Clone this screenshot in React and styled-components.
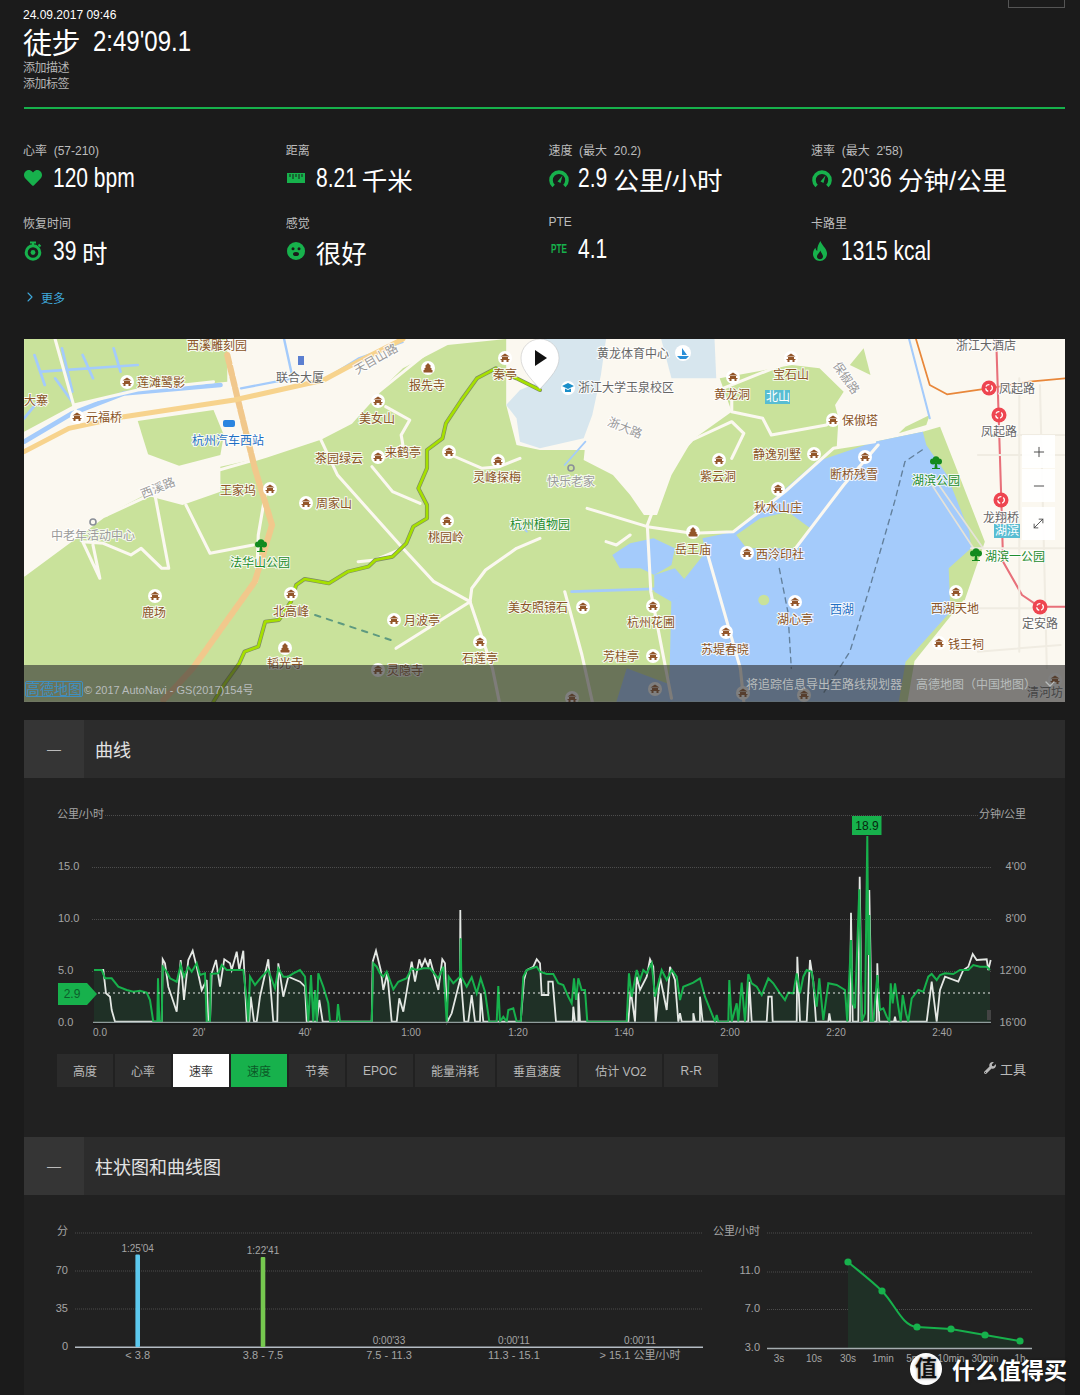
import React from "react";
import styled, { createGlobalStyle } from "styled-components";
import { Plus, Minus, MoveDiagonal, ChevronRight, ChevronDown } from "lucide-react";
import { FaWrench, FaHeart } from "react-icons/fa";

const GREEN = "#17b14c";
const SANS = `"Liberation Sans", "Noto Sans CJK SC", sans-serif`;

const Global = createGlobalStyle`
  html, body { margin: 0; padding: 0; background: #1b1b1b; }
  body { font-family: ${SANS}; color: #fff; overflow: hidden; }
`;

const Page = styled.div`
  width: 1080px;
  height: 1395px;
  overflow: hidden;
  position: relative;
  box-sizing: border-box;
  padding: 0 15px 0 24px;
`;

const Header = styled.header`
  display: flex;
  justify-content: space-between;
  align-items: flex-start;
  padding-top: 8px;
  height: 107px;
  box-sizing: border-box;
`;

const TopBox = styled.div`
  width: 55px;
  height: 7px;
  margin-top: -8px;
  border: 1px solid #555;
  border-top: 0;
`;

const DateLine = styled.div`
  font-size: 12px;
  line-height: 14px;
  height: 14px;
  margin-left: -1px;
`;

const Title = styled.div`
  display: flex;
  align-items: center;
  gap: 13px;
  height: 38px;
`;

const TitleCjk = styled.span`
  font-size: 29px;
  letter-spacing: -0.5px;
  margin-left: -1px;
`;

// no condensed face is installed, so the numerals are squeezed from a regular one;
// $w is the width they end up taking in the flow
const Squeezed = styled.span`
  display: inline-block;
  width: ${(p) => p.$w}px;
  white-space: pre;
  transform: scaleX(${(p) => p.$scale || 0.75});
  transform-origin: left center;
`;

const TitleTime = styled(Squeezed)`
  font-size: 30px;
`;

const HeaderLink = styled.div`
  font-size: 12px;
  line-height: 16px;
  color: #b5b5b5;
  letter-spacing: -0.5px;
  margin-left: -1px;
`;

const Divider = styled.div`
  height: 2px;
  background: ${GREEN};
`;

const StatGrid = styled.section`
  display: grid;
  grid-template-columns: repeat(4, 262.7px);
  row-gap: 17px;
  margin-top: 34px;
`;

const Stat = styled.div`
  height: 56px;
  margin-top: ${(p) => (p.$raised ? "-2px" : "0")};
`;

const StatLabel = styled.div`
  font-size: 12px;
  line-height: 16px;
  color: #bdbdbd;
  white-space: pre;
  margin-left: -1px;
`;

const StatRow = styled.div`
  display: flex;
  align-items: center;
  height: 38px;
`;

const IconSlot = styled.div`
  width: 29px;
  flex: none;
  display: flex;
  align-items: center;
  color: ${GREEN};
`;

const PteMark = styled(Squeezed)`
  font-size: 12px;
  font-weight: 700;
  margin-left: 2px;
`;

const Value = styled.div`
  display: flex;
  align-items: center;
  gap: 5px;
  font-size: 28px;
  white-space: pre;
`;

const Unit = styled.span`
  font-size: 25.5px;
`;

const More = styled.div`
  display: flex;
  align-items: center;
  gap: 3px;
  margin: 17px 0 0 -2px;
  height: 16px;
  font-size: 12px;
  color: #3fa9dc;
`;

const MapFrame = styled.section`
  position: relative;
  height: 363px;
  margin-top: 34px;
  overflow: hidden;
`;

const MapSvg = styled.svg`
  display: block;
`;

const MapBar = styled.div`
  position: absolute;
  left: 0;
  right: 0;
  bottom: 0;
  height: 37px;
  background: rgba(48, 48, 48, 0.62);
  display: flex;
  align-items: flex-end;
  padding: 0 7px 5px 1px;
  box-sizing: border-box;
  font-size: 12px;
  color: #b8bcbc;
`;

const AmapLogo = styled.span`
  font-size: 14px;
  color: #3f8fc0;
  border: 1px solid #3f8fc0;
  border-radius: 2px;
  line-height: 14px;
  margin-right: 1px;
`;

const Credit = styled.span`
  font-size: 11px;
`;

const BarRight = styled.div`
  margin-left: auto;
  display: flex;
  align-items: center;
  gap: 14px;
  padding-bottom: 5px;
`;

const BarChevron = styled(ChevronDown)`
  margin-left: -8px;
`;

const ZoomStack = styled.div`
  position: absolute;
  left: 998px;
  top: 96px;
  width: 33px;
  display: flex;
  flex-direction: column;
`;

const ZoomBtn = styled.div`
  height: 33px;
  margin-bottom: ${(p) => p.$gap || 1}px;
  background: rgba(255, 255, 255, 0.92);
  color: #444;
  display: flex;
  align-items: center;
  justify-content: center;
`;

const Panel = styled.section`
  margin-top: ${(p) => p.$top}px;
  background: #212121;
`;

const PanelHead = styled.div`
  display: flex;
  align-items: center;
  height: 58px;
  background: #2c2c2c;
`;

const Toggle = styled.div`
  width: 60px;
  height: 58px;
  background: #353535;
  color: #bbb;
  display: flex;
  align-items: center;
  justify-content: center;
  font-size: 14px;
`;

const PanelTitle = styled.h2`
  margin: 0 0 0 11px;
  font-size: 18px;
  font-weight: 400;
  color: #e2e2e2;
`;

const Body = styled.div`
  padding-bottom: ${(p) => p.$pad || 0}px;
`;

const ChartSvg = styled.svg`
  display: block;
  flex: none;
`;

const ToolRow = styled.div`
  display: flex;
  align-items: flex-start;
  margin-top: 9px;
  padding: 0 39px 0 33px;
  height: 33px;
`;

const Metric = styled.button`
  height: 33px;
  padding: 0 16px;
  margin-right: 2px;
  border: 0;
  font: 12px ${SANS};
  background: ${(p) => (p.$state === "white" ? "#fff" : p.$state === "green" ? GREEN : "#2b2b2b")};
  color: ${(p) => (p.$state === "white" ? "#333" : p.$state === "green" ? "#0c5a28" : "#b9b9b9")};
`;

const Tools = styled.div`
  margin-left: auto;
  display: flex;
  align-items: center;
  gap: 4px;
  height: 28px;
  font-size: 13px;
  color: #b9b9b9;
`;

const Charts = styled.div`
  display: flex;
`;

const Axis = styled.text`
  font-family: ${SANS};
  font-size: ${(p) => p.$size || 11}px;
  fill: ${(p) => p.$fill || "#a5a5a5"};
  text-anchor: ${(p) => p.$anchor || "start"};
  dominant-baseline: central;
`;

const MapLabel = styled.text`
  font-family: ${SANS};
  font-size: 12px;
  text-anchor: middle;
  dominant-baseline: central;
  paint-order: stroke;
  stroke: rgba(255, 255, 255, 0.85);
  stroke-width: 2px;
  fill: ${(p) => ({ brown: "#8a5426", green: "#1d8c2d", blue: "#1e6fc4", gray: "#9a9a9a", dark: "#666" }[p.$kind])};
`;

const Watermark = styled.div`
  position: absolute;
  left: 910px;
  top: 1352px;
  display: flex;
  align-items: center;
  gap: 10px;
  font-size: 23px;
  font-weight: 700;
  color: #fff;
  text-shadow: 0 0 3px rgba(0, 0, 0, 0.5);
`;

const WatermarkDisc = styled.span`
  width: 32px;
  height: 32px;
  border-radius: 50%;
  background: #fff;
  color: #111;
  font-size: 22px;
  line-height: 31px;
  text-align: center;
`;

// traced series, in the coordinates of a 3x crop starting at (30, 800)
const green = [192,510,215,510,225,535,245,535,265,560,290,570,310,575,330,572,350,578,360,600,370,665,382,665,384,535,388,665,395,665,398,500,410,515,420,535,440,545,452,495,462,530,475,500,485,515,500,490,510,525,525,520,530,665,540,665,542,522,565,520,575,495,590,510,640,510,650,600,655,665,660,530,675,555,695,530,715,510,735,565,745,505,760,530,775,530,790,520,810,510,825,530,835,665,843,525,850,665,855,570,860,665,865,520,880,560,895,610,900,665,920,665,924,612,930,665,1025,665,1030,490,1040,500,1050,520,1060,530,1070,515,1090,568,1105,545,1130,535,1145,505,1160,510,1180,505,1200,505,1225,535,1240,500,1250,665,1256,530,1270,550,1290,530,1292,415,1294,530,1310,560,1325,532,1340,580,1352,535,1365,575,1378,665,1400,665,1405,558,1410,665,1420,650,1430,665,1435,630,1450,625,1460,665,1472,665,1480,530,1490,510,1520,500,1530,515,1550,522,1570,522,1585,550,1600,555,1615,590,1625,610,1632,535,1638,600,1645,535,1655,570,1665,570,1672,665,1790,665,1797,520,1805,590,1820,510,1830,540,1840,510,1850,520,1865,490,1875,590,1895,510,1910,540,1925,510,1940,530,1950,600,1960,560,1990,548,2010,535,2025,590,2045,640,2055,665,2060,645,2065,665,2095,665,2098,540,2105,665,2120,610,2125,665,2135,548,2145,665,2155,522,2165,550,2180,560,2195,585,2215,535,2230,550,2250,580,2265,600,2275,578,2290,580,2300,520,2310,580,2320,530,2330,510,2345,515,2360,620,2368,535,2380,660,2395,550,2420,555,2445,570,2452,665,2463,420,2468,610,2475,625,2488,268,2495,665,2505,640,2512,108,2515,465,2518,345,2523,665,2530,665,2542,525,2550,630,2560,625,2570,650,2578,665,2582,550,2588,610,2595,550,2605,620,2612,665,2618,585,2628,640,2635,665,2645,595,2665,570,2680,575,2695,530,2705,522,2720,540,2730,525,2745,520,2770,522,2790,510,2815,510,2830,495,2850,500,2870,500,2880,510];
const white = [192,510,220,510,228,580,240,590,245,630,255,665,395,665,398,478,405,490,415,560,425,590,440,635,452,480,462,600,475,480,488,452,500,500,515,570,530,540,535,665,540,665,545,520,558,480,570,560,583,478,600,490,605,510,620,455,628,510,640,452,650,665,658,665,662,590,672,665,680,665,690,590,715,478,730,665,742,665,745,490,760,590,775,530,810,545,825,560,830,665,860,665,868,600,878,665,1025,665,1028,485,1038,452,1052,510,1060,570,1072,520,1085,665,1100,665,1108,595,1120,635,1145,485,1155,545,1168,478,1175,500,1185,478,1195,500,1200,478,1225,570,1237,478,1245,490,1252,665,1265,640,1290,540,1291,330,1293,540,1303,665,1315,665,1325,585,1335,665,1350,665,1352,580,1360,665,1472,665,1482,540,1490,510,1510,500,1520,478,1530,490,1535,585,1555,585,1555,545,1568,545,1578,665,1628,665,1630,620,1635,665,1645,665,1645,580,1650,665,1795,665,1802,570,1815,665,1820,530,1830,570,1850,530,1860,478,1870,500,1877,665,1890,530,1910,630,1920,500,1935,540,1945,665,1950,640,1955,665,1990,665,1990,640,1995,665,2010,665,2010,590,2018,665,2155,665,2158,545,2165,665,2210,665,2215,590,2225,590,2228,665,2300,665,2302,470,2310,665,2330,665,2340,480,2350,545,2358,665,2395,665,2398,640,2402,665,2460,665,2463,338,2468,665,2485,665,2489,230,2495,665,2515,665,2518,270,2525,665,2540,665,2542,490,2548,665,2592,665,2595,650,2598,665,2690,665,2705,545,2720,665,2730,570,2745,530,2785,545,2800,510,2815,500,2828,462,2840,480,2870,478,2875,510,2882,480];

const toChart = (arr) => {
  const out = [];
  for (let i = 0; i < arr.length; i += 2) out.push(`${(30 + arr[i] / 3).toFixed(1)},${(800 + arr[i + 1] / 3).toFixed(1)}`);
  return out.join(" ");
};

const xTicks = [["0.0", 100], ["20'", 199], ["40'", 305], ["1:00", 411], ["1:20", 518], ["1:40", 624], ["2:00", 730], ["2:20", 836], ["2:40", 942]];

const SpeedChart = () => (
  <ChartSvg width="1041" height="267" viewBox="24 778 1041 267">
    {[815.5, 867.5, 919.5, 971.5].map((y, i) => (
      <line key={y} x1={i === 0 ? 105 : 92} x2={i === 0 ? 978 : 991} y1={y} y2={y} stroke="#4d4d4d" strokeDasharray="1 1" />
    ))}
    <polygon points={`94,1022.5 ${toChart(green)} 990,1022.5`} fill="#1f3026" />
    <polyline points={toChart(white)} fill="none" stroke="#e4e8e4" strokeWidth="1.8" />
    <polyline points={toChart(green)} fill="none" stroke={GREEN} strokeWidth="2" />
    <line x1="93" x2="991" y1="993" y2="993" stroke="#e8e8e8" strokeDasharray="2 3" />
    <line x1="93" x2="991" y1="1022.5" y2="1022.5" stroke="#8f9b9b" strokeWidth="1.6" />
    <line x1="93" x2="991" y1="1023.8" y2="1023.8" stroke="#0c0c0c" />
    <rect x="987" y="1010" width="4" height="10" fill="#444" />
    <polygon points="58,983 87,983 97,994 87,1005 58,1005" fill={GREEN} />
    <Axis x="72" y="994" $anchor="middle" $fill="#0d5e2b" $size={12}>2.9</Axis>
    <rect x="852" y="816" width="29.5" height="19" fill={GREEN} />
    <Axis x="867" y="826" $anchor="middle" $fill="#06280f" $size={12}>18.9</Axis>
    <Axis x="57" y="814">公里/小时</Axis>
    <Axis x="58" y="866">15.0</Axis>
    <Axis x="58" y="918">10.0</Axis>
    <Axis x="58" y="970">5.0</Axis>
    <Axis x="58" y="1022">0.0</Axis>
    <Axis x="1026" y="814" $anchor="end">分钟/公里</Axis>
    <Axis x="1026" y="866" $anchor="end">4'00</Axis>
    <Axis x="1026" y="918" $anchor="end">8'00</Axis>
    <Axis x="1026" y="970" $anchor="end">12'00</Axis>
    <Axis x="1026" y="1022" $anchor="end">16'00</Axis>
    {xTicks.map(([t, x]) => (
      <Axis key={t} x={x} y="1032" $anchor="middle" $size={10}>{t}</Axis>
    ))}
  </ChartSvg>
);

const zoneBars = [
  { x: 137.7, top: 1254.5, color: "#5cc8ee", time: "1:25'04", range: "< 3.8" },
  { x: 263, top: 1257, color: "#76c84f", time: "1:22'41", range: "3.8 - 7.5" },
  { x: 389, time: "0:00'33", range: "7.5 - 11.3" },
  { x: 514, time: "0:00'11", range: "11.3 - 15.1" },
  { x: 640, time: "0:00'11", range: "> 15.1 公里/小时" },
];

const ZoneChart = () => (
  <ChartSvg width="684" height="200" viewBox="24 1195 684 200">
    {[1233, 1271, 1309].map((y) => (
      <line key={y} x1="75" x2="703" y1={y} y2={y} stroke="#4d4d4d" strokeDasharray="1 1" />
    ))}
    <Axis x="68" y="1231" $anchor="end">分</Axis>
    <Axis x="68" y="1270" $anchor="end">70</Axis>
    <Axis x="68" y="1308" $anchor="end">35</Axis>
    <Axis x="68" y="1346" $anchor="end">0</Axis>
    <line x1="75" x2="703" y1="1347.2" y2="1347.2" stroke="#b4bcc4" strokeWidth="1.4" />
    {zoneBars.map((b) => (
      <React.Fragment key={b.time + b.x}>
        {b.top && <rect x={b.x - 2.3} y={b.top} width="4.6" height={1347 - b.top} rx="1" fill={b.color} />}
        <Axis x={b.x} y={b.top ? b.top - 6.5 : 1340} $anchor="middle" $size={10}>{b.time}</Axis>
        <Axis x={b.x} y="1355" $anchor="middle">{b.range}</Axis>
      </React.Fragment>
    ))}
  </ChartSvg>
);

const peakPts = [[848, 1262], [882, 1291], [917, 1327], [951, 1329], [985, 1335], [1020, 1341]];
const peakLabels = [["3s", 779], ["10s", 814], ["30s", 848], ["1min", 883], ["5min", 917], ["10min", 951], ["30min", 985], ["1h", 1020]];
const peakLine = "M848,1262 C860,1272 872,1281 882,1291 C895,1304 902,1326 917,1327 L951,1329 L985,1335 L1020,1341";

const PeakChart = () => (
  <ChartSvg width="357" height="200" viewBox="708 1195 357 200">
    {[1233, 1272, 1309.5].map((y) => (
      <line key={y} x1="767" x2="1032" y1={y} y2={y} stroke="#4d4d4d" strokeDasharray="1 1" />
    ))}
    <path d={`${peakLine} L1020,1348 L848,1348 Z`} fill="#1f3026" />
    <path d={peakLine} fill="none" stroke={GREEN} strokeWidth="2" />
    {peakPts.map(([x, y]) => <circle key={x} cx={x} cy={y} r="3.6" fill={GREEN} />)}
    <line x1="767" x2="1032" y1="1348.5" y2="1348.5" stroke="#a5adb0" strokeWidth="1.6" />
    <Axis x="760" y="1231" $anchor="end">公里/小时</Axis>
    <Axis x="760" y="1270" $anchor="end">11.0</Axis>
    <Axis x="760" y="1308" $anchor="end">7.0</Axis>
    <Axis x="760" y="1347" $anchor="end">3.0</Axis>
    {peakLabels.map(([t, x]) => (
      <Axis key={t} x={x} y="1358" $anchor="middle" $size={10}>{t}</Axis>
    ))}
  </ChartSvg>
);

// map shapes are traced from a crop scaled 2.904 x 3, origin y = 335
const GreenLand = "70,720 300,545 420,480 530,510 640,470 640,395 770,365 930,310 1020,262 1100,170 1170,100 1300,30 1470,12 1470,210 1500,330 1568,345 1698,345 1695,375 1780,420 1830,480 1870,540 1908,540 1950,420 2010,315 2125,230 2090,130 2300,90 2380,100 2450,170 2425,210 2435,250 2430,335 2540,320 2680,290 2730,275 2770,380 2860,620 2800,800 2660,980 2640,1100 70,1100";
const LakeShape = "2540,320 2370,380 2270,470 2130,590 2040,610 2050,650 1950,780 1945,990 1940,1100 2610,1100 2630,980 2760,830 2755,700 2820,640 2815,590 2750,420 2690,330 2680,290";

const roads = [
  "160,12 215,215 240,280 310,540",
  "215,210 400,165 620,140",
  "660,60 690,190 740,400 770,480 750,600 745,740",
  "540,510 610,655 735,630",
  "270,630 290,730 240,620 300,625 380,660 410,640 470,700 490,700 450,480",
  "70,720 300,545 520,440 770,365 930,310 1020,262 1100,170 1280,20",
  "930,310 980,420 1170,640 1260,740 1365,800 1430,1000 1450,1100",
  "1080,395 1140,470 1220,505",
  "1120,215 1190,255 1165,300 1170,330 1120,365",
  "1310,360 1400,400 1450,395 1510,370",
  "1365,800 1150,940",
  "1365,800 1370,760 1410,705 1500,640 1568,610",
  "1170,640 1090,675 1040,680",
  "1705,520 1880,575 2010,595 2130,590 2280,470 2420,340 2540,320",
  "1880,575 1890,770 1950,1090",
  "1880,570 1950,380 2010,315 2125,260 2160,295 2125,370",
  "2125,185 2125,230 2215,250 2240,300 2400,270 2425,240",
  "2050,640 2150,1000 2160,1100",
  "2550,330 2450,450 2310,640",
  "2040,185 2390,40 2470,12",
  "1830,600 1790,630 1760,620",
  "1640,770 1690,960 1720,1100",
  "2800,800 2660,980 2640,1100",
];

const temples = [[127,382],[77,417],[378,401],[378,457],[449,452],[498,461],[270,489],[306,503],[447,521],[155,596],[291,594],[394,620],[480,642],[378,670],[505,358],[791,358],[733,377],[833,420],[814,454],[719,460],[865,457],[778,489],[747,553],[583,607],[653,606],[795,602],[726,632],[653,656],[956,592],[939,643],[572,698],[655,689],[743,693],[804,695],[1055,680]];
const towers = [[428,368],[285,648],[693,532]];
const trees = [[261,546],[936,463],[976,555]];
const metros = [[989,388],[999,415],[1001,500],[1040,607]];

const mapLabels = [
  ["西溪雕刻园",217,346],["莲滩鹭影",161,383],["联合大厦",300,378,"dark"],["报先寺",427,386],["秦亭",505,375],["大寨",36,401],["元福桥",104,418],["美女山",377,419],["杭州汽车西站",228,441,"blue"],["茶园绿云",339,459],["来鹤亭",403,453],["灵峰探梅",497,478],["王家坞",238,491],["周家山",334,504],["中老年活动中心",93,536,"gray"],["快乐老家",571,482,"gray"],["杭州植物园",540,525,"green"],["桃园岭",446,538],["法华山公园",260,563,"green"],["鹿场",154,613],["北高峰",291,612],["月波亭",422,621],["美女照镜石",538,608],["杭州花圃",651,623],["石莲亭",480,659],["韬光寺",285,664],["灵隐寺",405,671],["芳桂亭",621,657],["苏堤春晓",725,650],["湖心亭",795,620],["西湖",842,610,"blue"],["西湖天地",955,609],["钱王祠",966,645],["定安路",1040,624,"dark"],["湖滨一公园",1015,557,"green"],["龙翔桥",1001,518,"dark"],["湖滨公园",936,481,"green"],["断桥残雪",854,475],["秋水山庄",778,508],["岳王庙",693,550],["西泠印社",780,555],["紫云洞",718,477],["静逸别墅",777,455],["保俶塔",860,421],["黄龙洞",732,395],["宝石山",791,375],["黄龙体育中心",633,354,"dark"],["浙江大学玉泉校区",626,388,"dark"],["凤起路",1017,389,"dark"],["凤起路",999,432,"dark"],["浙江大酒店",986,346,"dark"],["清河坊",1045,693,"dark"],
];

const roadNames = [["西溪路",158,488,-22],["天目山路",376,359,-30],["浙大路",625,428,22],["保俶路",846,378,55]];

const Temple = ({ x, y }) => (
  <g transform={`translate(${x} ${y})`}>
    <circle r="7" fill="#fff" />
    <path d="M-4.5,-1.5 L0,-4.5 L4.5,-1.5 Z M-3,-1 H3 V1 H-3 Z M-4.5,1 H4.5 V2 H-4.5 Z M-3.5,2 H-1.5 V4 H-3.5 Z M1.5,2 H3.5 V4 H1.5 Z" fill="#93562a" />
  </g>
);

const Tower = ({ x, y }) => (
  <g transform={`translate(${x} ${y})`}>
    <circle r="7" fill="#fff" />
    <path d="M0,-5 L3,-2 H-3 Z M-2.5,-2 H2.5 V0 H-2.5 Z M-3.5,0 H3.5 V2 H-3.5 Z M-4.5,2 H4.5 V4.5 H-4.5 Z" fill="#93562a" />
  </g>
);

const Tree = ({ x, y }) => (
  <g transform={`translate(${x} ${y})`}>
    <circle cx="-3" cy="-1.5" r="3" fill="#138a1e" />
    <circle cx="3" cy="-1.5" r="3" fill="#138a1e" />
    <circle cy="-3.5" r="3.2" fill="#138a1e" />
    <path d="M-1,0 H1 L1.5,5 H-1.5 Z M-4,5 H4 V6 H-4 Z" fill="#138a1e" />
  </g>
);

const Metro = ({ x, y }) => (
  <g transform={`translate(${x} ${y})`}>
    <circle r="7.5" fill="#ee4550" />
    <circle r="3.4" fill="none" stroke="#fff" strokeWidth="1.4" strokeDasharray="4 2" />
  </g>
);

const routeD = "M620,1100 L650,1050 L695,985 L710,950 L750,935 L770,860 L810,855 L845,800 L860,750 L885,732 L955,745 L1010,710 L1070,695 L1090,675 L1140,665 L1180,625 L1200,575 L1240,550 L1240,510 L1215,460 L1240,400 L1240,345 L1285,310 L1295,265 L1340,195 L1385,130 L1440,100 L1465,115 L1500,130 L1568,165";

const MapArt = () => (
  <MapSvg width="1041" height="363" viewBox="24 339 1041 363">
    <rect x="24" y="339" width="1041" height="363" fill="#fbf8f0" />
    <g transform="translate(0 335) scale(0.34435 0.33333)" fill="none" strokeLinejoin="round" strokeLinecap="round">
      <polygon points="70,12 660,12 660,140 380,170 215,210 70,290" fill="#c9e29b" />
      <polygon points="400,258 620,225 650,300 640,360 520,392 430,358" fill="#c9e29b" />
      <polygon points={GreenLand} fill="#c9e29b" />
      <polygon points="1470,210 1510,165 1568,140 1568,12 1760,12 1745,120 1720,240 1695,310 1568,340 1510,320 1500,250" fill="#d7e6ee" />
      <polygon points="1920,12 2075,12 2080,130 1950,130" fill="#d7e6ee" />
      <polygon points="2468,90 2508,40 2528,120" fill="#c9e29b" />
      <polygon points="2630,275 2700,240 2690,270 2610,295" fill="#c9e29b" />
      <polygon points={LakeShape} fill="#a4cbfb" />
      <polygon points="2138,600 2208,550 2288,530 2353,580 2308,640 2168,640" fill="#c9e29b" />
      <polygon points="1778,660 1830,625 1898,610 1960,640 1950,690 1900,720 1860,700 1800,700" fill="#a4cbfb" />
      <polygon points="1900,720 1960,700 2010,760 1950,800 1900,770" fill="#a4cbfb" />
      <circle cx="2218" cy="795" r="16" fill="#c9e29b" />
      <path d="M1660,770 L1940,760" stroke="#a4cbfb" strokeWidth="8" />
      <path d="M1820,1000 L1950,1050 L1950,1100 L1790,1100 Z" fill="#a4cbfb" />
      <path d="M100,60 L130,150 M180,40 L210,170 M240,60 L270,130 M330,40 L350,110 M120,110 L400,90 M110,200 L70,250 M160,130 L210,200" stroke="#a4cbfb" strokeWidth="8" />
      <path d="M70,320 L210,235 L360,175 L640,150" stroke="#a4cbfb" strokeWidth="14" />
      <path d="M825,12 L850,130 L700,160" stroke="#a4cbfb" strokeWidth="7" />
      <path d="M945,130 L1040,70 L1170,22" stroke="#a4cbfb" strokeWidth="5" />
      <path d="M1510,570 L1530,590 M1700,320 L1640,390" stroke="#a4cbfb" strokeWidth="5" />
      {roads.map((d) => (
        <polyline key={d} points={d} stroke="#fbf8f0" strokeWidth="9" />
      ))}
      <path d="M2640,12 L2700,250" stroke="#a4cbfb" strokeWidth="6" />
      <path d="M2660,12 L2700,150 L2750,178 L2870,160 L2990,140 L3095,130" stroke="#e8873a" strokeWidth="5" />
      <path d="M2893,12 L2908,500 L2913,680 L2968,780 L3018,815 L3095,815" stroke="#e8707a" strokeWidth="6" />
      <path d="M2720,440 L2855,640 M2700,440 L2840,660" stroke="#e5e2d8" strokeWidth="5" />
      <path d="M2900,300 H3095 M2840,360 H3095 M2960,130 L2960,950 M3020,150 L3040,1000 M2820,640 H3095 M2830,820 H3020 M2840,950 L3080,930" stroke="#f0ece2" strokeWidth="6" />
      <path d="M2678,345 L2628,380 L2598,500 L2528,750 L2468,950 L2388,1080" stroke="#63809c" strokeWidth="4" strokeDasharray="16 14" />
      <path d="M2263,700 L2288,830 L2298,1000" stroke="#63809c" strokeWidth="4" strokeDasharray="16 14" />
      <path d="M660,60 L690,190 L740,400 L790,570 L740,740 L560,1000 L470,1100" stroke="#f1c88c" strokeWidth="18" strokeDasharray="26 8" />
      <path d="M70,350 L200,280 L360,245 L680,195 L940,135 L1040,80 L1170,12" stroke="#f7d38d" strokeWidth="15" />
      <path d="M915,840 L1135,915" stroke="#5e9a80" strokeWidth="6" strokeDasharray="16 20" />
      <path d={routeD} stroke="#7d8c66" strokeWidth="12" />
      <path d={routeD} stroke="#a6e000" strokeWidth="8" />
    </g>
    <rect x="765" y="390" width="25" height="14" fill="#58bdd2" />
    <rect x="994" y="524" width="26" height="14" fill="#58bdd2" />
    {temples.map(([x, y]) => <Temple key={`${x}-${y}`} x={x} y={y} />)}
    {towers.map(([x, y]) => <Tower key={`${x}-${y}`} x={x} y={y} />)}
    {trees.map(([x, y]) => <Tree key={`${x}-${y}`} x={x} y={y} />)}
    {metros.map(([x, y]) => <Metro key={`${x}-${y}`} x={x} y={y} />)}
    <circle cx="683" cy="353" r="8" fill="#fff" />
    <path d="M677,356 H689 L686,359 H680 Z M682,348 V355 H687 Z" fill="#2a8fd8" />
    <circle cx="568" cy="388" r="7" fill="#fff" />
    <path d="M562,386 L568,383 L574,386 L568,389 Z M565,388.5 V392 H571 V388.5 L568,390 Z" fill="#1b8fc9" />
    <rect x="223" y="420" width="12" height="7" rx="2" fill="#2a84e0" />
    <rect x="298" y="356" width="6" height="9" fill="#5b7fd0" />
    <circle cx="93" cy="522" r="3" fill="none" stroke="#8a8f98" strokeWidth="1.6" />
    <circle cx="571" cy="468" r="3" fill="none" stroke="#8a8f98" strokeWidth="1.6" />
    {mapLabels.map(([t, x, y, k]) => (
      <MapLabel key={`${t}${x}`} x={x} y={y} $kind={k || "brown"}>{t}</MapLabel>
    ))}
    {roadNames.map(([t, x, y, r]) => (
      <MapLabel key={t} x={x} y={y} $kind="gray" transform={`rotate(${r} ${x} ${y})`}>{t}</MapLabel>
    ))}
    <Axis x="778" y="397" $anchor="middle" $fill="#fff" $size={12}>北山</Axis>
    <Axis x="1007" y="531" $anchor="middle" $fill="#fff" $size={12}>湖滨</Axis>
    <path d="M540,389 C528,376 521,368 521,358 A19,19 0 0 1 559,358 C559,368 552,376 540,389 Z" fill="#fff" stroke="#bbb" strokeWidth="0.5" />
    <path d="M535,350 L547,358 L535,366 Z" fill="#111" />
  </MapSvg>
);

const Gauge = () => (
  <svg width="20" height="19" viewBox="0 0 20 18" fill="none">
    <path d="M4.6,16.5 A8,8 0 1 1 15.4,16.5" stroke="currentColor" strokeWidth="3.6" />
    <path d="M8.5,12 L13.5,6 L11.5,13.5 Z" fill="currentColor" />
  </svg>
);

const Ruler = () => (
  <svg width="18" height="10" viewBox="0 0 18 10">
    <rect width="18" height="10" fill="currentColor" />
    <path d="M3,1 V4 M6,1 V6 M9,1 V4 M12,1 V6 M15,1 V4" stroke="#1b1b1b" strokeWidth="1" />
  </svg>
);

const Stopwatch = () => (
  <svg width="18" height="20" viewBox="0 0 18 20" fill="none">
    <circle cx="9" cy="11.5" r="6.8" stroke="currentColor" strokeWidth="3" />
    <circle cx="9" cy="11.5" r="2.4" fill="currentColor" />
    <path d="M6,1.5 H12 M9,1.5 V4 M14.5,3.5 L16.5,5.5" stroke="currentColor" strokeWidth="2" />
  </svg>
);

const Face = () => (
  <svg width="18" height="18" viewBox="0 0 18 18">
    <circle cx="9" cy="9" r="9" fill="currentColor" />
    <circle cx="6" cy="6.8" r="1.5" fill="#1b1b1b" />
    <circle cx="12" cy="6.8" r="1.5" fill="#1b1b1b" />
    <ellipse cx="9" cy="12" rx="3" ry="2" fill="#1b1b1b" />
  </svg>
);

const Flame = () => (
  <svg width="16" height="20" viewBox="0 0 16 20">
    <path fillRule="evenodd" fill="currentColor" d="M8.5,0 C9.5,4 14.5,7 15,12 C15.3,16.5 12,20 8,20 C4,20 0.8,17 1,12.5 C1.1,10 2.4,8 3.5,6.8 C3.7,8.5 4.3,9.6 5.3,10 C5,6 6.5,3 8.5,0 Z M8.3,9.5 C7.8,12 5,13 5,15.8 C5,17.4 6.3,18.3 8,18.3 C9.7,18.3 11,17.2 11,15.6 C11,13.3 9,12 8.3,9.5 Z" />
  </svg>
);

const stats = [
  { label: "心率  (57-210)", icon: <FaHeart size={18} />, value: "120 bpm", w: 82 },
  { label: "距离", icon: <Ruler />, value: "8.21", w: 41, unit: "千米" },
  { label: "速度  (最大  20.2)", icon: <Gauge />, value: "2.9", w: 30, unit: "公里/小时" },
  { label: "速率  (最大  2'58)", icon: <Gauge />, value: "20'36", w: 52, unit: "分钟/公里" },
  { label: "恢复时间", icon: <Stopwatch />, value: "39", w: 24, unit: "时" },
  { label: "感觉", icon: <Face />, unit: "很好" },
  { label: "PTE", icon: <PteMark $w={16} $scale={0.68}>PTE</PteMark>, value: "4.1", w: 29, raised: true },
  { label: "卡路里", icon: <Flame />, value: "1315 kcal", w: 90 },
];

const metrics = ["高度", "心率", "速率", "速度", "节奏", "EPOC", "能量消耗", "垂直速度", "估计 VO2", "R-R"];

export default function App() {
  return (
    <Page>
      <Global />
      <Header>
        <div>
          <DateLine>24.09.2017 09:46</DateLine>
          <Title>
            <TitleCjk>徒步</TitleCjk>
            <TitleTime $w={99} $scale={0.8}>2:49'09.1</TitleTime>
          </Title>
          <HeaderLink>添加描述</HeaderLink>
          <HeaderLink>添加标签</HeaderLink>
        </div>
        <TopBox />
      </Header>
      <Divider />
      <StatGrid>
        {stats.map((s) => (
          <Stat key={s.label} $raised={s.raised}>
            <StatLabel>{s.label}</StatLabel>
            <StatRow>
              <IconSlot>{s.icon}</IconSlot>
              <Value>
                {s.value && <Squeezed $w={s.w}>{s.value}</Squeezed>}
                {s.unit && <Unit>{s.unit}</Unit>}
              </Value>
            </StatRow>
          </Stat>
        ))}
      </StatGrid>
      <More>
        <ChevronRight size={16} strokeWidth={1.6} />
        更多
      </More>
      <MapFrame>
        <MapArt />
        <ZoomStack>
          <ZoomBtn><Plus size={16} strokeWidth={1.4} /></ZoomBtn>
          <ZoomBtn $gap={5}><Minus size={16} strokeWidth={1.4} /></ZoomBtn>
          <ZoomBtn><MoveDiagonal size={15} strokeWidth={1.4} /></ZoomBtn>
        </ZoomStack>
        <MapBar>
          <AmapLogo>高德地图</AmapLogo>
          <Credit>© 2017 AutoNavi - GS(2017)154号</Credit>
          <BarRight>
            <span>将追踪信息导出至路线规划器</span>
            <span>高德地图（中国地图）</span>
            <BarChevron size={16} />
          </BarRight>
        </MapBar>
      </MapFrame>
      <Panel $top={18}>
        <PanelHead>
          <Toggle>—</Toggle>
          <PanelTitle>曲线</PanelTitle>
        </PanelHead>
        <Body $pad={50}>
          <SpeedChart />
          <ToolRow>
            {metrics.map((m) => (
              <Metric key={m} $state={m === "速率" ? "white" : m === "速度" ? "green" : undefined}>{m}</Metric>
            ))}
            <Tools><FaWrench size={12} />工具</Tools>
          </ToolRow>
        </Body>
      </Panel>
      <Panel $top={0}>
        <PanelHead>
          <Toggle>—</Toggle>
          <PanelTitle>柱状图和曲线图</PanelTitle>
        </PanelHead>
        <Charts>
          <ZoneChart />
          <PeakChart />
        </Charts>
      </Panel>
      <Watermark>
        <WatermarkDisc>值</WatermarkDisc>
        什么值得买
      </Watermark>
    </Page>
  );
}
